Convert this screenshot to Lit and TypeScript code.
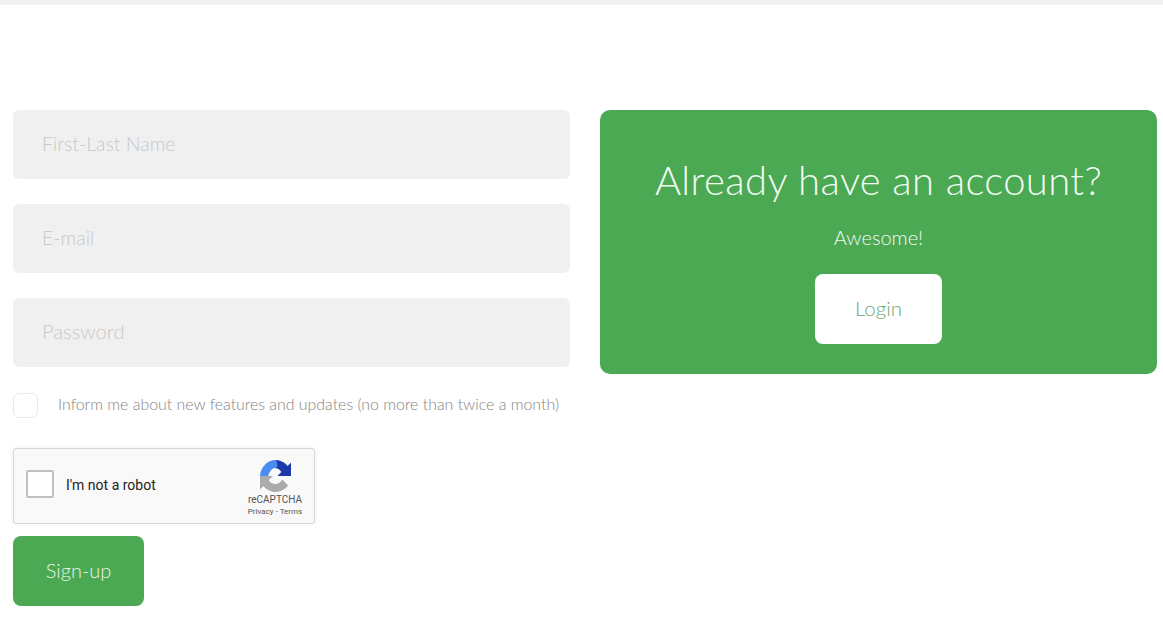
import { LitElement, html, css } from "lit";
import { customElement } from "lit/decorators.js";

@customElement("app-root")
export class AppRoot extends LitElement {
  static styles = css`
    :host { display: block; height: 623px; background: #fff; font-family: Lato, "Open Sans", sans-serif; font-weight: 300; overflow: hidden; }
    * { box-sizing: border-box; }
    .topbar { height: 5px; background: #f1f1f1; }
    .page { display: grid; grid-template-columns: 557px 557px; column-gap: 30px; padding: 105px 0 0 13px; align-items: start; }
    .form { display: flex; flex-direction: column; }
    .field { height: 69px; background: #f0f0f0; border-radius: 6px; margin-bottom: 25px; padding: 0 0 2px 29px; display: flex; align-items: center; font-size: 19.5px; color: #c8c8c8; }
    .field.pw { font-size: 20.2px; padding-bottom: 3px; }
    .check-row { display: flex; align-items: center; gap: 20px; height: 26px; margin-bottom: 30px; font-size: 15.9px; color: #858585; white-space: nowrap; }
    .check-row .label { padding-bottom: 3px; }
    .check { width: 25px; height: 25px; border: 1px solid #e9e9e9; border-radius: 6px; background: #fff; flex: none; }
    .captcha { width: 302px; height: 76px; background: #f9f9f9; border: 1px solid #d6d6d6; border-radius: 3px; box-shadow: 0 0 4px rgba(0,0,0,.08); display: flex; align-items: center; padding: 0 12px 3px 12px; font-family: Roboto, sans-serif; font-weight: 400; margin-bottom: 12px; }
    .cbox { width: 28px; height: 28px; margin-top: -1px; background: #fff; border: 2px solid #c1c1c1; border-radius: 2px; flex: none; }
    .robot { font-size: 14px; color: #222; margin-left: 12px; flex: 1; }
    .brand { display: flex; flex-direction: column; align-items: center; width: 56px; color: #555; align-self: flex-start; margin: 11px -1px 0 0; }
    .brand svg { display: block; width: 31px; height: 32px; }
    .brand .name { font-size: 10px; line-height: 12px; margin-top: 2px; }
    .brand .links { font-size: 8px; line-height: 10px; margin-top: 1px; white-space: nowrap; }
    .signup { width: 131px; height: 70px; background: #4ba853; border-radius: 8px; padding-bottom: 2px; display: flex; align-items: center; justify-content: center; color: #e8f7e8; font-size: 20px; }
    .card { height: 264px; background: #4ba853; border-radius: 10px; display: flex; flex-direction: column; align-items: center; color: #f2fbf2; }
    h2 { margin: 42px 0 0; font-size: 40px; line-height: 56px; font-weight: 300; letter-spacing: 0.38px; white-space: nowrap; }
    .sub { margin-top: 16px; font-size: 20px; line-height: 26px; }
    .login { margin-top: 24px; width: 127px; height: 70px; padding-bottom: 2px; background: #fff; border-radius: 8px; display: flex; align-items: center; justify-content: center; color: #6aa873; font-size: 20.5px; }
  `;

  render() {
    return html`
      <div class="topbar"></div>
      <div class="page">
        <div class="form">
          <div class="field">First-Last Name</div>
          <div class="field">E-mail</div>
          <div class="field pw">Password</div>
          <div class="check-row"><span class="check"></span><span class="label">Inform me about new features and updates (no more than twice a month)</span></div>
          <div class="captcha">
            <span class="cbox"></span>
            <span class="robot">I'm not a robot</span>
            <div class="brand">
              <svg viewBox="0 0 64 64" preserveAspectRatio="none">
                <path fill="#ababab" d="M0 32C0 36 0 44 0 59L7 52C13 59 22 64 32 64C42 64 51 59 58 51L46 39C43 44 38 48 32 48C26 48 21 45 18 40L27 32C20 32 10 32 0 32Z"/>
                <path fill="#1c3aa9" d="M32 0C42 0 51 5 57 12L64 5V32H36L44 24C41 19 36 16 30 16L34 8Z"/>
                <path fill="#4a8cf0" d="M0 32C1 19 9 7 21 2C24 1 28 0 34 0L36 14L30 16C24 17 19 24 17 32Z"/>
              </svg>
              <span class="name">reCAPTCHA</span>
              <span class="links">Privacy - Terms</span>
            </div>
          </div>
          <div class="signup">Sign-up</div>
        </div>
        <div class="card">
          <h2>Already have an account?</h2>
          <div class="sub">Awesome!</div>
          <div class="login">Login</div>
        </div>
      </div>
    `;
  }
}
